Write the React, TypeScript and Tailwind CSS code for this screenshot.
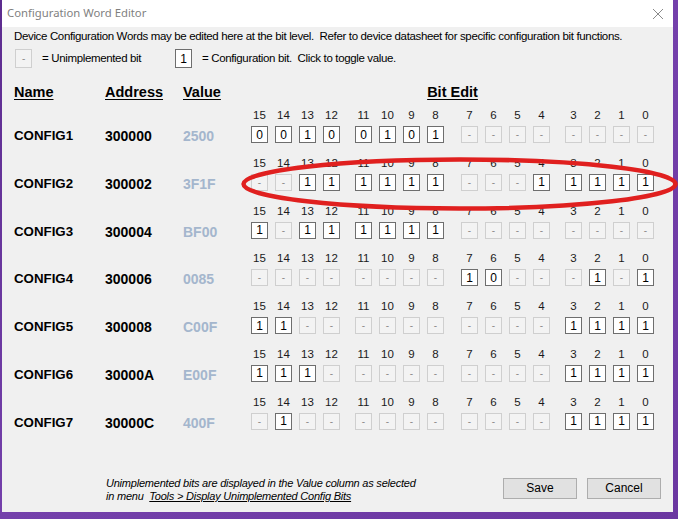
import React from "react";

interface ConfigWord {
  name: string;
  address: string;
  value: string;
  bits: string; // bit 15 .. bit 0, "-" = unimplemented
}

const configs: ConfigWord[] = [
  { name: "CONFIG1", address: "300000", value: "2500", bits: "00100101--------" },
  { name: "CONFIG2", address: "300002", value: "3F1F", bits: "--111111---11111" },
  { name: "CONFIG3", address: "300004", value: "BF00", bits: "1-111111--------" },
  { name: "CONFIG4", address: "300006", value: "0085", bits: "--------10---1-1" },
  { name: "CONFIG5", address: "300008", value: "C00F", bits: "11----------1111" },
  { name: "CONFIG6", address: "30000A", value: "E00F", bits: "111---------1111" },
  { name: "CONFIG7", address: "30000C", value: "400F", bits: "-1----------1111" },
];

const groupGap = ["", "ml-[15px]", "ml-[17px]", "ml-[15px]"];

const font = { fontFamily: '"Liberation Sans", Arial, sans-serif' };

const BitBox = ({ v, tall }: { v: string; tall?: boolean }) => {
  const size = tall ? "w-[17px] h-[19px]" : "w-[17px] h-[17px]";
  if (v === "-") {
    return (
      <div
        className={`${size} flex items-center justify-center border border-[#cfcfcf] bg-[#f3f3f3] text-[10px] text-[#8c8c8c]`}
      >
        -
      </div>
    );
  }
  return (
    <div
      className={`${size} flex items-center justify-center border border-[#6e6e6e] bg-white text-[12px] text-black`}
    >
      {v}
    </div>
  );
};

const BitRow = ({ cfg }: { cfg: ConfigWord }) => {
  const groups = [0, 1, 2, 3];
  return (
    <div className="flex h-[35px]">
      <div className="w-[91px] pt-[20px] text-[13.3px] font-bold leading-[16px] text-black">
        {cfg.name}
      </div>
      <div className="w-[78px] pt-[20px] text-[14px] font-bold leading-[16px] text-black">
        {cfg.address}
      </div>
      <div className="w-[68px] pt-[20px] text-[14px] font-bold leading-[16px] text-[#a4b6cd]">
        {cfg.value}
      </div>
      <div className="flex">
        {groups.map((g) => (
          <div key={g} className={`flex gap-[7px] ${groupGap[g]}`}>
            {[0, 1, 2, 3].map((i) => {
              const idx = g * 4 + i;
              const bitNo = 15 - idx;
              return (
                <div key={i} className="flex w-[17px] flex-col items-center">
                  <div className="h-[14px] text-center text-[11.5px] leading-[14px] text-[#1a1a1a]">
                    {bitNo}
                  </div>
                  <div className="mt-[4px]">
                    <BitBox v={cfg.bits[idx]} />
                  </div>
                </div>
              );
            })}
          </div>
        ))}
      </div>
    </div>
  );
};

export default function App() {
  return (
    <div
      className="relative h-[519px] w-[678px] overflow-hidden bg-gradient-to-br from-[#5d2c8f] via-[#7440ab] to-[#6a36a0] pl-[2px]"
      style={font}
    >
      <div className="flex h-[512px] w-[671px] flex-col bg-[#f0f0f0]">
        {/* Title bar */}
        <div className="flex h-[27px] items-center justify-between bg-white pl-[5px] pr-[9px]">
          <span
            className="text-[11.3px] text-[#7f7f7f]"
            style={{ fontFamily: '"Noto Sans", "Open Sans", sans-serif' }}
          >
            Configuration Word Editor
          </span>
          <svg width="12" height="12" viewBox="0 0 12 12">
            <path d="M1 1 L11 11 M11 1 L1 11" stroke="#8a8a8a" strokeWidth="1" fill="none" />
          </svg>
        </div>

        <div className="flex flex-1 flex-col px-[12px]">
          {/* Intro */}
          <div className="mt-[2px] h-[14px] text-[11.5px] leading-[14px] tracking-[-0.35px] text-black">
            Device Configuration Words may be edited here at the bit level.&nbsp; Refer to device datasheet
            for specific configuration bit functions.
          </div>

          {/* Legend */}
          <div className="mt-[6px] flex items-center text-[11.5px] tracking-[-0.35px] text-black">
            <div className="ml-[1px]">
              <BitBox v="-" tall />
            </div>
            <span className="ml-[10px] w-[133px]">= Unimplemented bit</span>
            <BitBox v="1" tall />
            <span className="ml-[10px]">= Configuration bit.&nbsp; Click to toggle value.</span>
          </div>

          {/* Header */}
          <div className="mt-[16px] flex h-[18px] items-center text-[14.5px] font-bold text-black">
            <span className="w-[91px] underline underline-offset-2">Name</span>
            <span className="w-[78px] underline underline-offset-2">Address</span>
            <span className="w-[68px] underline underline-offset-2">Value</span>
            <span className="w-[403px] text-center underline underline-offset-2">Bit Edit</span>
          </div>

          {/* Rows */}
          <div className="mt-[6px] flex flex-col gap-[12.8px]">
            {configs.map((c) => (
              <BitRow key={c.name} cfg={c} />
            ))}
          </div>

          {/* Footer */}
          <div className="mt-[47px] flex justify-between">
            <div className="pl-[92px] text-[11px] italic leading-[13.5px] tracking-[-0.22px] text-black">
              <div>Unimplemented bits are displayed in the Value column as selected</div>
              <div>
                in menu&nbsp;&nbsp;<span className="underline">Tools &gt; Display Unimplemented Config Bits</span>
              </div>
            </div>
            <div className="mt-[1px] flex gap-[10px]">
              <button className="h-[21px] w-[74px] border border-[#adadad] bg-[#e1e1e1] text-[12px] text-black">
                Save
              </button>
              <button className="h-[21px] w-[74px] border border-[#adadad] bg-[#e1e1e1] text-[12px] text-black">
                Cancel
              </button>
            </div>
          </div>
        </div>
      </div>

      {/* Red hand-drawn ellipse overlay */}
      <svg className="pointer-events-none absolute left-0 top-0" width="678" height="519">
        <ellipse cx="459.5" cy="184" rx="216" ry="24.5" fill="none" stroke="#e0201f" strokeWidth="4.5" />
      </svg>
    </div>
  );
}
